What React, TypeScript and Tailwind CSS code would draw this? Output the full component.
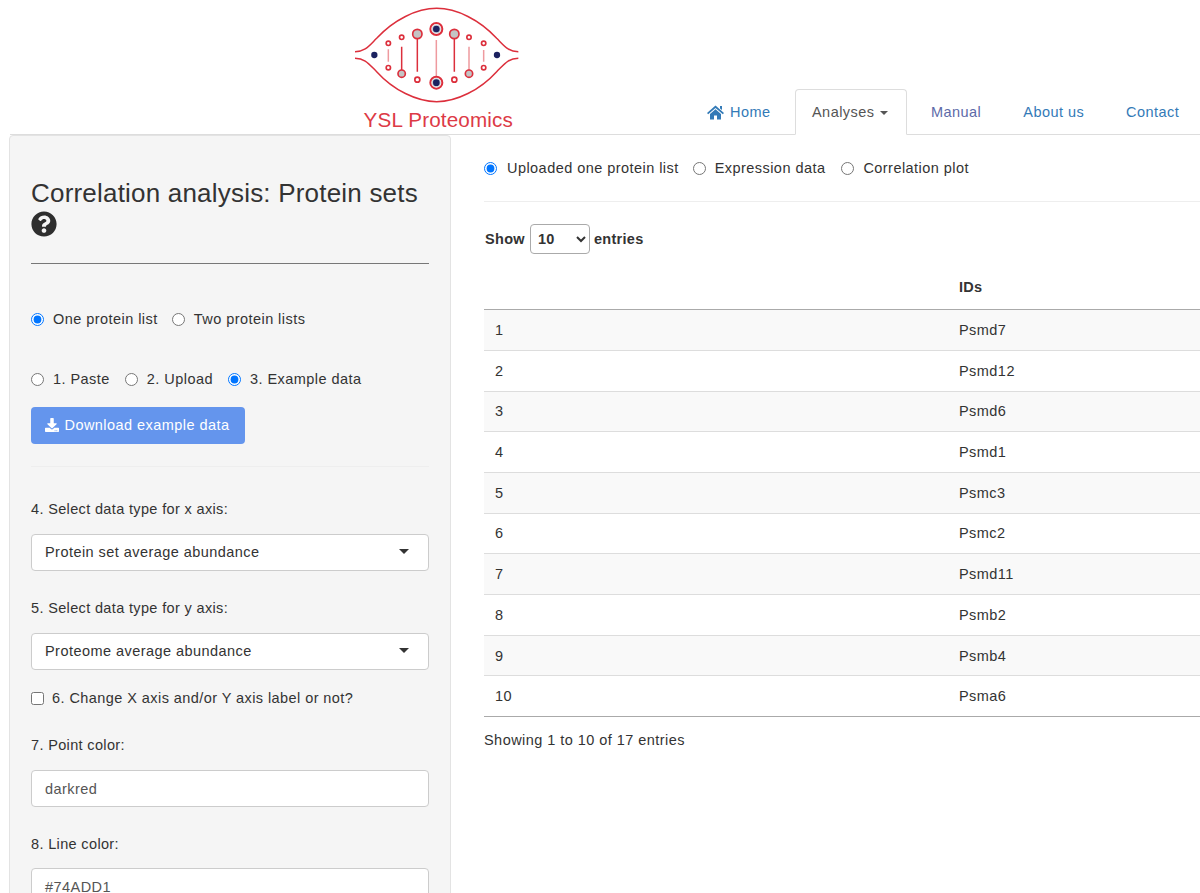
import { FaDownload, FaQuestionCircle } from "react-icons/fa";

const ink = "#dc2f3c";

function Ring({ x, y, r, fill = "#fff", w = 5 }: { x: number; y: number; r: number; fill?: string; w?: number }) {
  return <circle cx={x} cy={y} r={r} fill={fill} stroke={ink} strokeWidth={w} />;
}

function Bull({ x, y }: { x: number; y: number }) {
  return (
    <g>
      <circle cx={x} cy={y} r={18} fill="#fff" stroke={ink} strokeWidth={6} />
      <circle cx={x} cy={y} r={13.5} fill="#c9d0d8" stroke="none" />
      <circle cx={x} cy={y} r={10} fill="#1c2260" />
    </g>
  );
}

function Logo() {
  return (
    <svg width="200" height="134" viewBox="0 0 600 402" className="block shrink-0">
      <path d="M45 155 C75 155 85 140 110 115 C160 60 230 25 290 25 C350 25 420 60 470 115 C495 140 505 155 535 155" fill="none" stroke={ink} strokeWidth={4.5} />
      <path d="M45 175 C75 175 85 190 110 215 C160 270 230 305 290 305 C350 305 420 270 470 215 C495 190 505 175 535 175" fill="none" stroke={ink} strokeWidth={4.5} />
      <circle cx={103} cy={165} r={9.5} fill="#1c2260" />
      <circle cx={471} cy={165} r={9.5} fill="#1c2260" />
      <path d="M145 148V185M431 150V185M387 140V210M289 120V230" stroke="#ee9a9f" strokeWidth={4.5} />
      <path d="M185 140V210M232 117V215M343 117V215" stroke={ink} strokeWidth={4.5} />
      <Ring x={145} y={130} r={6.5} />
      <Ring x={145} y={203} r={6.5} />
      <Ring x={185} y={112} r={6.5} />
      <Ring x={185} y={221} r={11} fill="#c4c4c4" />
      <Ring x={232} y={102} r={14} fill="#c4c4c4" />
      <Ring x={232} y={239} r={7.5} />
      <Ring x={343} y={102} r={14} fill="#c4c4c4" />
      <Ring x={343} y={239} r={7.5} />
      <Ring x={387} y={112} r={6.5} />
      <Ring x={387} y={221} r={11} fill="#c4c4c4" />
      <Ring x={431} y={130} r={6.5} />
      <Ring x={431} y={203} r={6.5} />
      <Bull x={289} y={87} />
      <Bull x={289} y={248} />
      <text x={295} y={382} textAnchor="middle" fontFamily="'Liberation Sans', sans-serif" fontSize={62} fill="#dd3a46">YSL Proteomics</text>
    </svg>
  );
}

function HomeIcon() {
  return (
    <svg width="17" height="15" viewBox="0 0 17 15" className="shrink-0" fill="currentColor">
      <path d="M8.5 0.5 L17 8 L15.8 9.3 L8.5 3 L1.2 9.3 L0 8 Z" />
      <path d="M13 1 H15 V5 L13 3.4 Z" />
      <path d="M3 9 L8.5 4.3 L14 9 V14.5 H10 V10.5 H7 V14.5 H3 Z" />
    </svg>
  );
}

function Radio({ label, checked, gap = "gap-[9px]" }: { label: string; checked?: boolean; gap?: string }) {
  return (
    <label className={`flex items-center ${gap} h-[20px]`}>
      <input type="radio" readOnly checked={!!checked} className="m-0 w-[13px] h-[13px]" />
      <span>{label}</span>
    </label>
  );
}

function Field({ value, arrow }: { value: string; arrow?: boolean }) {
  return (
    <div className={`relative h-[37px] rounded-[4px] border border-[#cccccc] bg-white px-[13px] flex items-center ${arrow ? "pb-[2px]" : ""}`}>
      <span className={arrow ? "text-[#333333]" : "text-[#555555]"}>{value}</span>
      {arrow && <span className="absolute right-[19px] top-[14px] w-0 h-0 border-x-[5px] border-x-transparent border-t-[5px] border-t-[#333333]" />}
    </div>
  );
}

const rows = ["Psmd7", "Psmd12", "Psmd6", "Psmd1", "Psmc3", "Psmc2", "Psmd11", "Psmb2", "Psmb4", "Psma6"];

export default function App() {
  return (
    <div className="h-[893px] overflow-hidden bg-white text-[14.5px] leading-[20px] text-[#333333] font-['Liberation_Sans',Arial,sans-serif] tracking-[0.45px]">
      <header className="ml-[10px] h-[135px] border-b border-[#dddddd] flex items-end">
        <div className="ml-[330px] self-start"><Logo /></div>
        <nav className="ml-[167px] flex items-end h-[46px] -mb-px">
          <a className="h-[46px] w-[88px] flex items-center gap-[6px] text-[#337ab7]"><HomeIcon />Home</a>
          <div className="w-[112px] h-[46px] pl-[16px] flex items-center gap-[6px] bg-white border border-[#dddddd] border-b-white rounded-t-[4px] text-[#555555]">
            Analyses
            <span className="w-0 h-0 mt-[2px] border-x-[4px] border-x-transparent border-t-[4px] border-t-[#555555]" />
          </div>
          <a className="h-[46px] flex items-center ml-[24px] text-[#5d6aa8]">Manual</a>
          <a className="h-[46px] flex items-center ml-[42px] text-[#337ab7]">About us</a>
          <a className="h-[46px] flex items-center ml-[42px] text-[#337ab7]">Contact</a>
        </nav>
      </header>
      <div className="flex items-start">
        <aside className="ml-[9px] w-[442px] h-[800px] shrink-0 bg-[#f5f5f5] border border-[#e3e3e3] rounded-[4px] px-[21px] pt-[43px]">
          <h3 className="text-[26px] leading-[29px] font-normal tracking-[0.2px] whitespace-nowrap">Correlation analysis: Protein sets</h3>
          <FaQuestionCircle className="mt-[3px] w-[26px] h-[26px] text-[#2e2e2e]" />
          <hr className="mt-[26px] border-t border-[#777777]" />
          <div className="mt-[45px] flex gap-[14px]">
            <Radio label="One protein list" checked />
            <Radio label="Two protein lists" />
          </div>
          <div className="mt-[40px] flex gap-[15px]">
            <Radio label="1. Paste" />
            <Radio label="2. Upload" />
            <Radio label="3. Example data" checked />
          </div>
          <button className="mt-[18px] h-[37px] w-[214px] pb-[1px] pr-[2px] rounded-[4px] bg-[#6495ed] text-white flex items-center justify-center gap-[4px]"><FaDownload className="w-[16px] h-[14px]" />Download example data</button>
          <hr className="mt-[22px] border-t border-[#eeeeee]" />
          <div className="mt-[32px] tracking-[0.35px]">4. Select data type for x axis:</div>
          <div className="mt-[15px]"><Field value="Protein set average abundance" arrow /></div>
          <div className="mt-[27px] tracking-[0.35px]">5. Select data type for y axis:</div>
          <div className="mt-[15px]"><Field value="Proteome average abundance" arrow /></div>
          <label className="mt-[18px] h-[20px] flex items-center gap-[8px]">
            <input type="checkbox" readOnly className="m-0 w-[13px] h-[13px]" />
            <span className="tracking-[0.43px]">6. Change X axis and/or Y axis label or not?</span>
          </label>
          <div className="mt-[27px] tracking-[0.35px]">7. Point color:</div>
          <div className="mt-[15px]"><Field value="darkred" /></div>
          <div className="mt-[27px] tracking-[0.35px]">8. Line color:</div>
          <div className="mt-[14px]"><Field value="#74ADD1" /></div>
        </aside>
        <main className="ml-[33px] flex-1 min-w-0 overflow-hidden">
          <div className="mt-[23px] flex">
            <Radio label="Uploaded one protein list" checked gap="gap-[10px]" />
            <div className="ml-[14px]"><Radio label="Expression data" /></div>
            <div className="ml-[16px]"><Radio label="Correlation plot" /></div>
          </div>
          <hr className="mt-[23px] border-t border-[#eeeeee]" />
          <div className="mt-[22px] flex items-center h-[30px] pl-[1px] gap-[4px] font-bold tracking-[0.3px]">
            <span>Show</span>
            <select className="ml-[1px] w-[60px] h-[30px] pl-[3px] rounded-[4px] border border-[#aaaaaa] bg-white font-bold" defaultValue="10">
              <option>10</option>
              <option>25</option>
            </select>
            <span>entries</span>
          </div>
          <table className="mt-[11px] w-[1000px] table-fixed border-collapse">
            <colgroup>
              <col className="w-[464px]" />
              <col />
            </colgroup>
            <thead>
              <tr className="h-[44.7px] border-b border-[#aaaaaa]">
                <th />
                <th className="text-left font-bold pl-[11px] pb-[1px] tracking-[0.3px]">IDs</th>
              </tr>
            </thead>
            <tbody>
              {rows.map((r, i) => (
                <tr key={r} className={`h-[40.7px] ${i % 2 === 0 ? "bg-[#f9f9f9]" : "bg-white"} ${i === rows.length - 1 ? "border-b border-[#aaaaaa]" : "border-b border-[#dddddd]"}`}>
                  <td className="pl-[11px] p-0">{i + 1}</td>
                  <td className="pl-[11px] p-0">{r}</td>
                </tr>
              ))}
            </tbody>
          </table>
          <div className="mt-[13px]">Showing 1 to 10 of 17 entries</div>
        </main>
      </div>
    </div>
  );
}
